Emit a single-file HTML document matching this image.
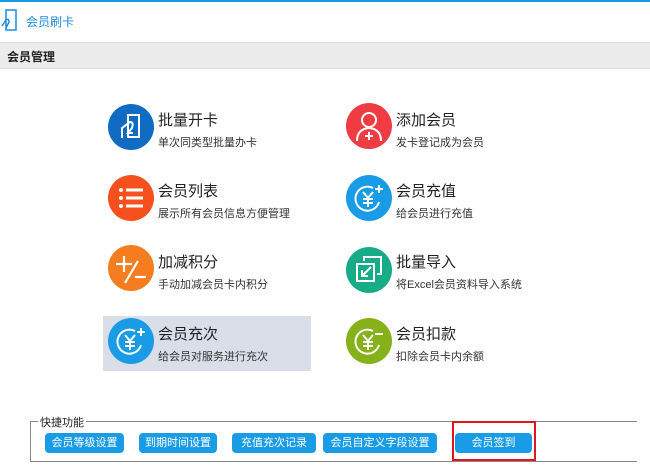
<!DOCTYPE html>
<html><head><meta charset="utf-8"><style>
*{margin:0;padding:0;box-sizing:border-box}
body{width:650px;height:473px;background:#fff;font-family:"Liberation Sans","Noto Sans CJK SC",sans-serif;position:relative;overflow:hidden;color:#222}
.a{position:absolute}
.t{font-size:15px;color:#222;white-space:nowrap}
.s{font-size:11px;color:#333;white-space:nowrap}
.c{position:absolute;width:46px;height:46px;border-radius:50%}
.c svg{width:46px;height:46px}
.b{position:absolute;top:433px;height:20px;background:#1a9be6;color:#fff;font-size:11px;border-radius:4px;text-align:center;line-height:20px}
</style></head><body>
<div class="a" style="left:0;top:0;width:650px;height:2px;background:#1a9be6"></div>
<svg class="a" style="left:0;top:8px" width="18" height="24" viewBox="0 0 18 24" fill="none" stroke="#1a8de0" stroke-width="1.5"><rect x="6" y="2" width="10" height="20"/><path d="M2 18 L6 12 Q9 10 9 14 L6 20"/></svg>
<div class="a" style="left:26px;top:13px;font-size:12px;color:#1a8de0">会员刷卡</div>
<div class="a" style="left:0;top:42px;width:650px;height:27px;background:#ececec;border-top:1px solid #ddd;border-bottom:1px solid #ddd"></div>
<div class="a" style="left:7px;top:48px;font-size:12px;font-weight:bold">会员管理</div>

<div class="a" style="left:103px;top:316px;width:208px;height:55px;background:#d9dee8"></div>

<div class="c" style="left:108px;top:104px;background:#0f6cc2"><svg viewBox="0 0 46 46" fill="none" stroke="#fff" stroke-width="2"><rect x="20" y="11" width="11" height="22"/><path d="M14 34 L14 24 L22 18 Q26 18 24 24 L20 29 L25 29"/></svg></div>
<div class="a t" style="left:158px;top:109px">批量开卡</div>
<div class="a s" style="left:158px;top:134px">单次同类型批量办卡</div>

<div class="c" style="left:108px;top:175px;background:#f5501e"><svg viewBox="0 0 46 46" fill="#fff"><circle cx="13" cy="15" r="2"/><circle cx="13" cy="23" r="2"/><circle cx="13" cy="31" r="2"/><rect x="18" y="13.5" width="17" height="3"/><rect x="18" y="21.5" width="17" height="3"/><rect x="18" y="29.5" width="17" height="3"/></svg></div>
<div class="a t" style="left:158px;top:180px">会员列表</div>
<div class="a s" style="left:158px;top:205px">展示所有会员信息方便管理</div>

<div class="c" style="left:108px;top:245px;background:#f57c1f"><svg viewBox="0 0 46 46" stroke="#fff" stroke-width="2.2" fill="none"><path d="M8 19H24M16 11V27M17 38L30 16M27 32H38"/></svg></div>
<div class="a t" style="left:158px;top:251px">加减积分</div>
<div class="a s" style="left:158px;top:276px">手动加减会员卡内积分</div>

<div class="c" style="left:108px;top:318px;background:#1a9be6"><svg viewBox="0 0 46 46" stroke="#fff" stroke-width="2" fill="none"><path d="M33 27 A12 12 0 1 1 27 13"/><path d="M17 17L22 23L27 17M22 23V32M17 24H27M17 28H27M33 10V18M29 14H37"/></svg></div>
<div class="a t" style="left:158px;top:323px">会员充次</div>
<div class="a s" style="left:158px;top:348px">给会员对服务进行充次</div>

<div class="c" style="left:346px;top:103px;background:#ee3c42"><svg viewBox="0 0 46 46" stroke="#fff" stroke-width="2" fill="none"><circle cx="23" cy="17" r="7"/><path d="M11 38 Q11 26 23 25 Q35 26 35 38M23 29V37M19 33H27"/></svg></div>
<div class="a t" style="left:396px;top:109px">添加会员</div>
<div class="a s" style="left:396px;top:134px">发卡登记成为会员</div>

<div class="c" style="left:346px;top:175px;background:#1a9be6"><svg viewBox="0 0 46 46" stroke="#fff" stroke-width="2" fill="none"><path d="M33 27 A12 12 0 1 1 27 13"/><path d="M17 17L22 23L27 17M22 23V32M17 24H27M17 28H27M33 10V18M29 14H37"/></svg></div>
<div class="a t" style="left:396px;top:180px">会员充值</div>
<div class="a s" style="left:396px;top:205px">给会员进行充值</div>

<div class="c" style="left:346px;top:247px;background:#17ab88"><svg viewBox="0 0 46 46" stroke="#fff" stroke-width="2" fill="none"><path d="M18 14V10H35V27H31"/><rect x="11" y="17" width="17" height="17"/><path d="M25 20L16 29M16 23V29H22"/></svg></div>
<div class="a t" style="left:396px;top:251px">批量导入</div>
<div class="a s" style="left:396px;top:276px">将Excel会员资料导入系统</div>

<div class="c" style="left:346px;top:318px;background:#86b11a"><svg viewBox="0 0 46 46" stroke="#fff" stroke-width="2" fill="none"><path d="M33 27 A12 12 0 1 1 27 13"/><path d="M17 17L22 23L27 17M22 23V32M17 24H27M17 28H27M29 16H37"/></svg></div>
<div class="a t" style="left:396px;top:323px">会员扣款</div>
<div class="a s" style="left:396px;top:348px">扣除会员卡内余额</div>

<div class="a" style="left:30px;top:421px;width:607px;height:41px;border:1px solid #888;border-right:none"></div>
<div class="a" style="left:38px;top:414px;font-size:11px;background:#fff;padding:0 2px">快捷功能</div>
<div class="b" style="left:45px;width:79px">会员等级设置</div>
<div class="b" style="left:139px;width:78px">到期时间设置</div>
<div class="b" style="left:232px;width:84px">充值充次记录</div>
<div class="b" style="left:323px;width:114px">会员自定义字段设置</div>
<div class="b" style="left:455px;width:77px">会员签到</div>
<div class="a" style="left:452px;top:421px;width:84px;height:40px;border:2px solid #e4141b"></div>
</body></html>
